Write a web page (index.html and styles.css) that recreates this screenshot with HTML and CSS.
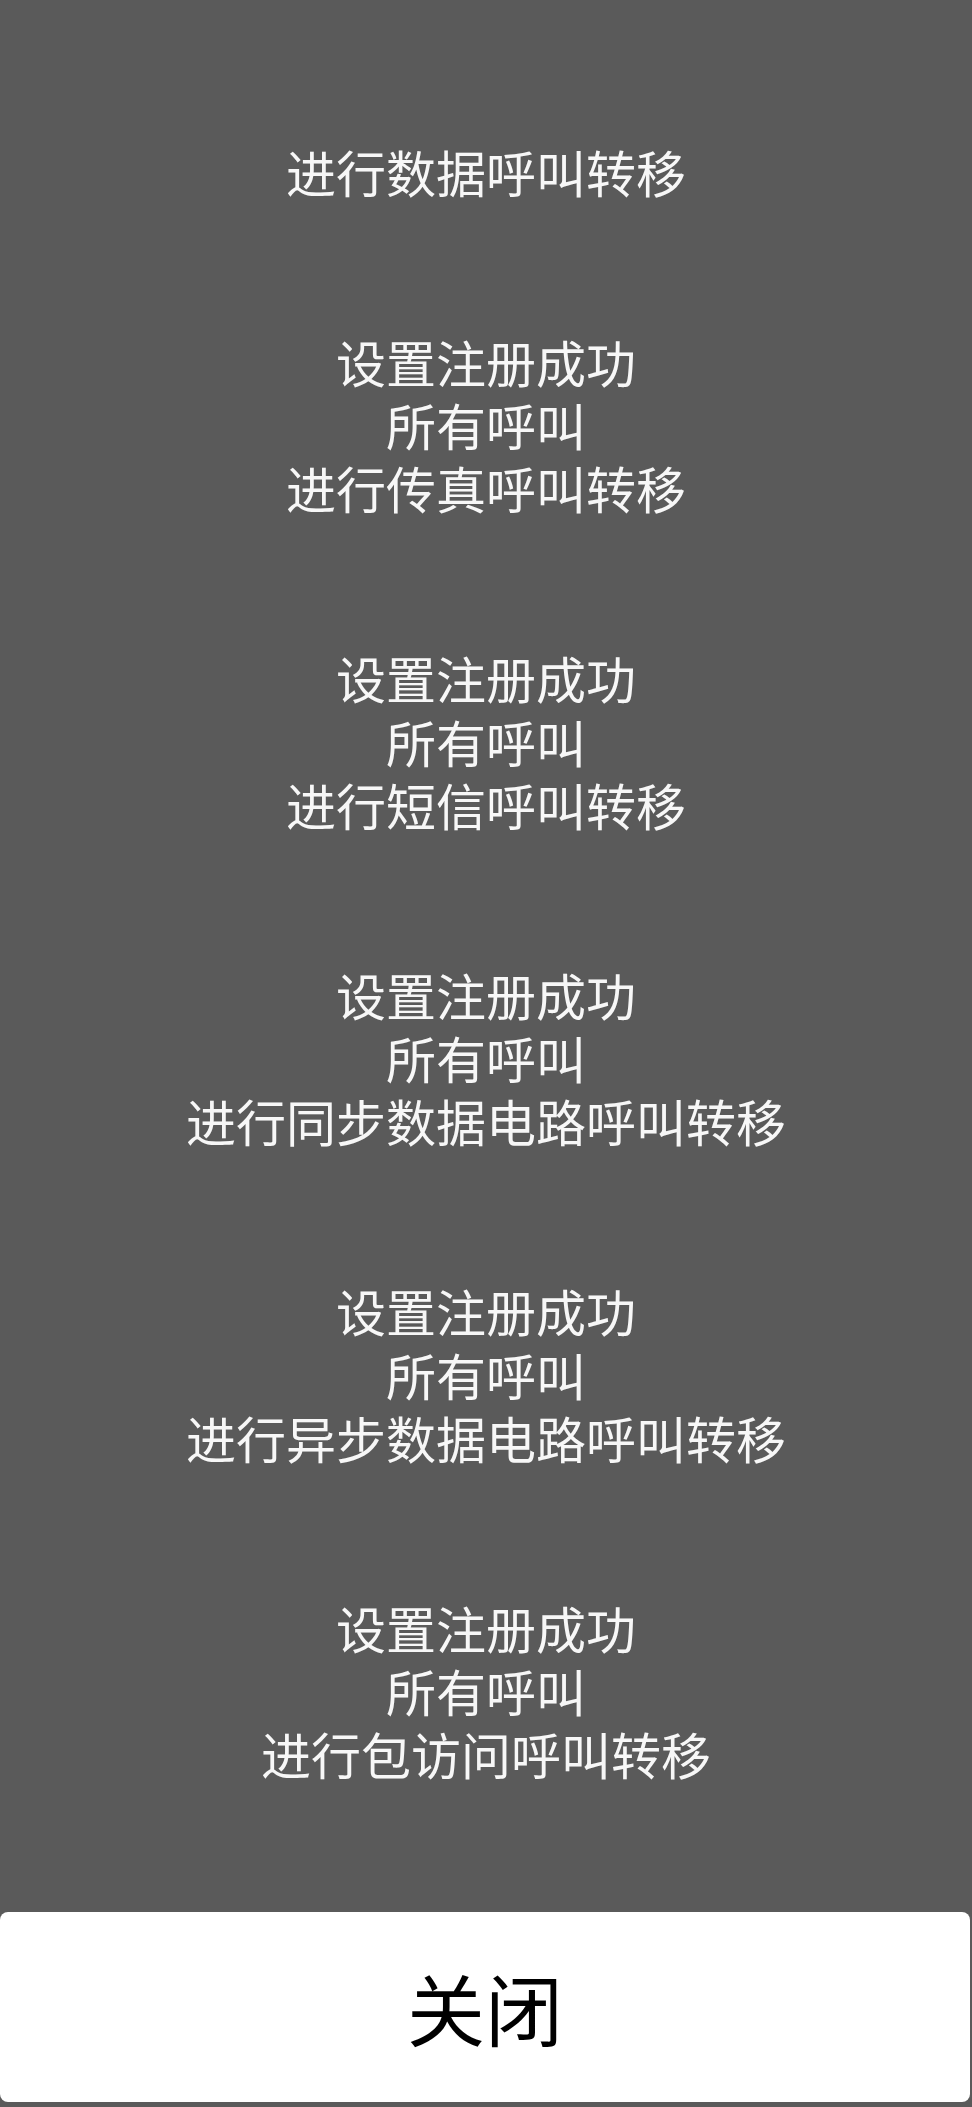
FILE: index.html
```html
<!DOCTYPE html>
<html lang="zh-CN">
<head>
<meta charset="utf-8">
<title>呼叫转移</title>
<link rel="stylesheet" href="styles.css">
</head>
<body>
<div class="page">
  <div class="list">
    <div class="group">
      <div class="line">进行数据呼叫转移</div>
    </div>
    <div class="group">
      <div class="line">设置注册成功</div>
      <div class="line">所有呼叫</div>
      <div class="line">进行传真呼叫转移</div>
    </div>
    <div class="group">
      <div class="line">设置注册成功</div>
      <div class="line">所有呼叫</div>
      <div class="line">进行短信呼叫转移</div>
    </div>
    <div class="group">
      <div class="line">设置注册成功</div>
      <div class="line">所有呼叫</div>
      <div class="line">进行同步数据电路呼叫转移</div>
    </div>
    <div class="group">
      <div class="line">设置注册成功</div>
      <div class="line">所有呼叫</div>
      <div class="line">进行异步数据电路呼叫转移</div>
    </div>
    <div class="group">
      <div class="line">设置注册成功</div>
      <div class="line">所有呼叫</div>
      <div class="line">进行包访问呼叫转移</div>
    </div>
  </div>
  <div class="close-btn">关闭</div>
</div>
</body>
</html>
```

FILE: styles.css
```css
html, body {
  margin: 0;
  padding: 0;
  background: #5a5a5a;
}

.page {
  min-height: 100vh;
  display: flex;
  flex-direction: column;
  font-family: "Noto Sans CJK SC", "Noto Sans", sans-serif;
  box-sizing: border-box;
  padding-bottom: 5px;
}

.list {
  display: flex;
  flex-direction: column;
  gap: 126.6px;
  padding-top: 140px;
  text-align: center;
  color: #f7f7f7;
  font-size: 50px;
}

.line {
  line-height: 63.3px;
  height: 63.3px;
  white-space: nowrap;
}

.close-btn {
  margin-top: auto;
  margin-left: 0;
  margin-right: 2px;
  height: 190px;
  background: #ffffff;
  border-radius: 8px;
  display: flex;
  align-items: center;
  justify-content: center;
  color: #000000;
  font-size: 78px;
  line-height: 1;
}
```
